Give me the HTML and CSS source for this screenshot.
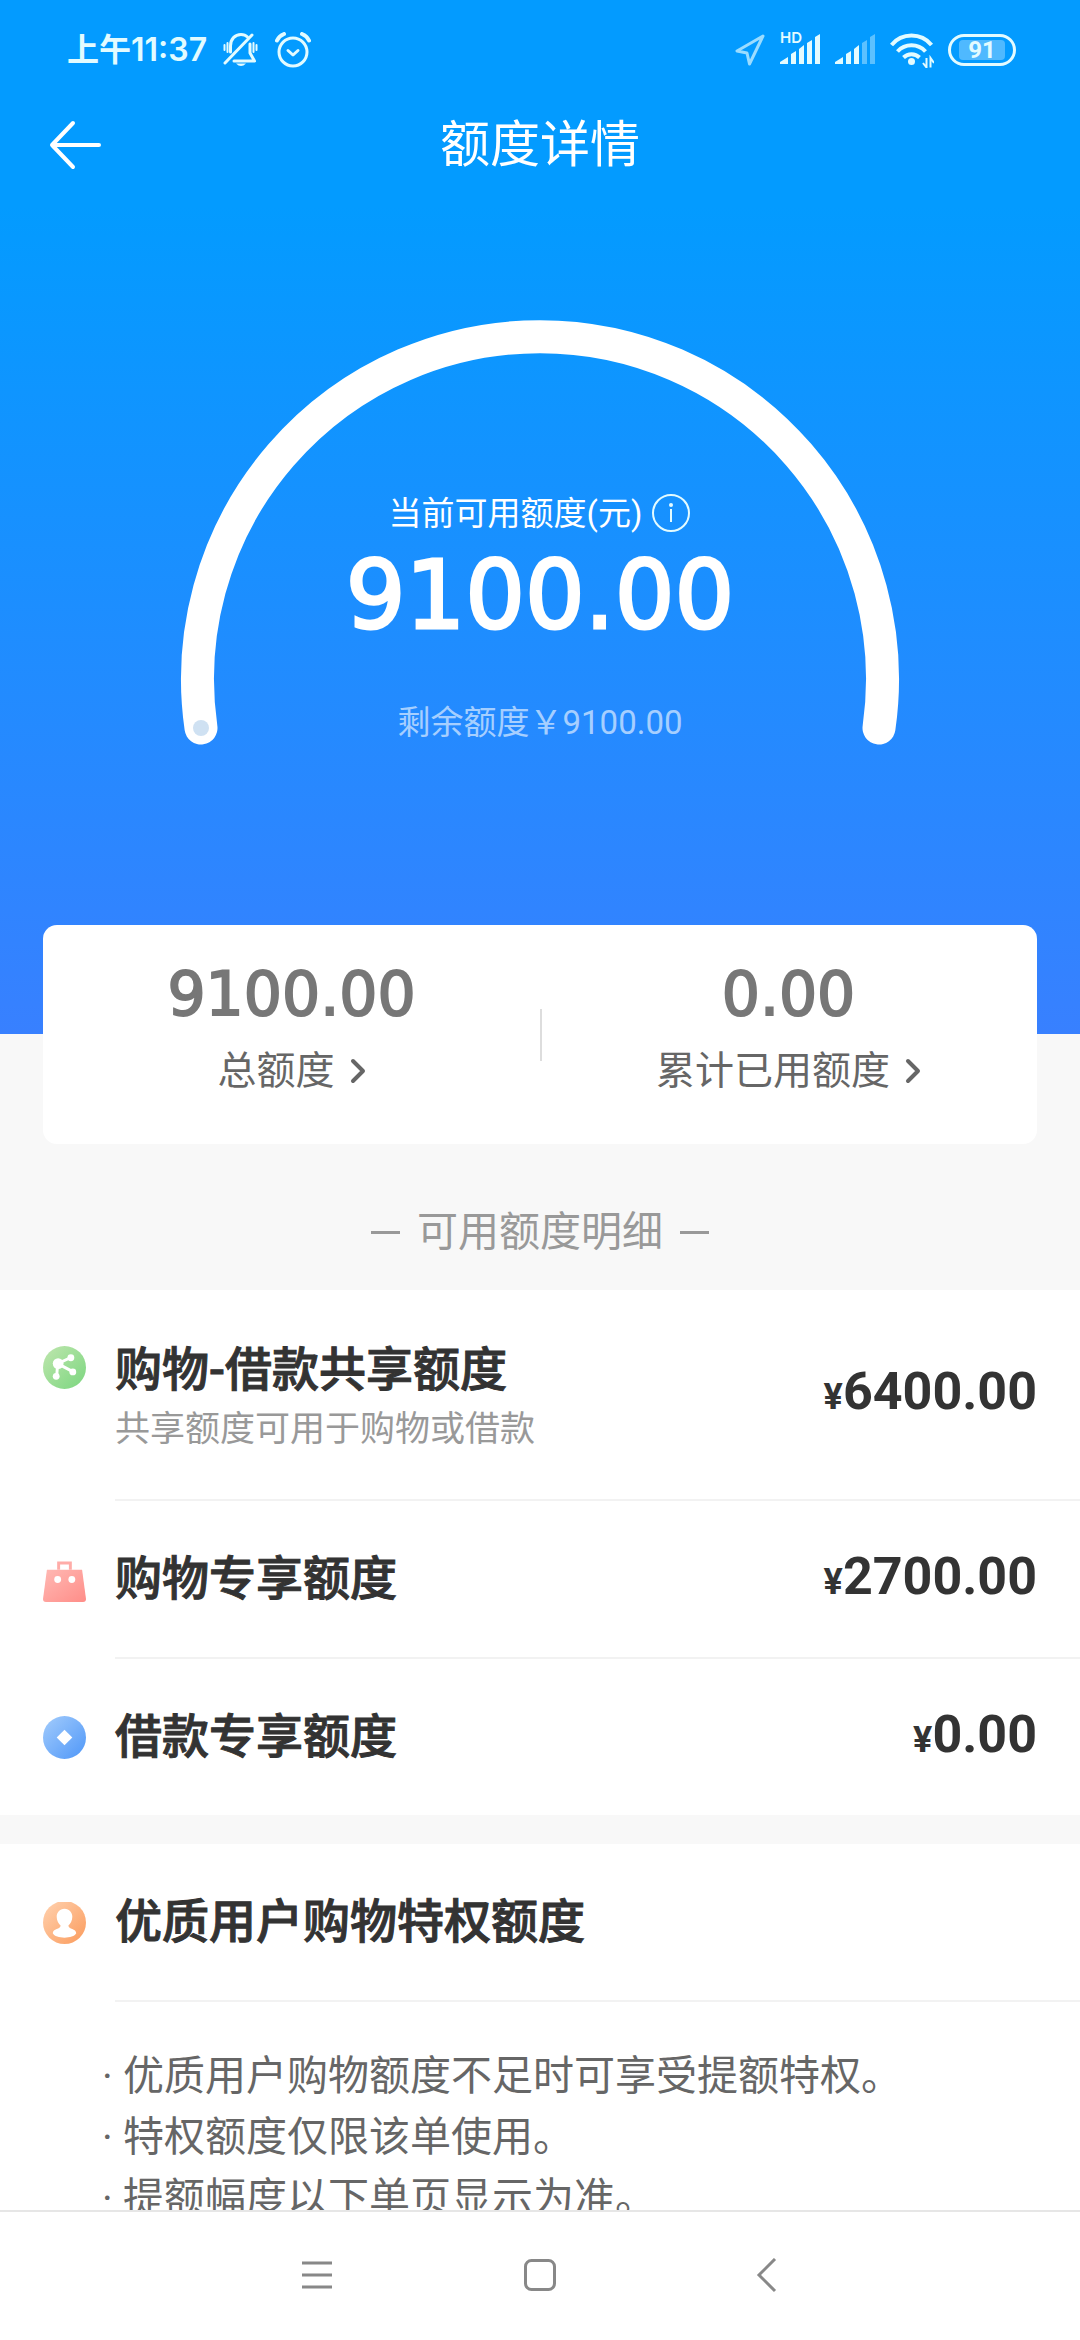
FILE: index.html
```html
<!DOCTYPE html>
<html lang="zh-CN">
<head>
<meta charset="utf-8">
<meta name="viewport" content="width=device-width, initial-scale=1">
<title>额度详情</title>
<link rel="stylesheet" href="styles.css">
</head>
<body>
<div class="app">
  <main class="content">
    <section class="hero">
      <div class="status">
        <div class="status-left">
          <span class="clock">上午11:37</span>
          <svg width="36" height="36" viewBox="0 0 36 36" fill="none" stroke="#e3fbff" stroke-width="3" stroke-linecap="round" stroke-linejoin="round">
            <path d="M2 31L29 3"/>
            <path d="M7.500 20V14C7.500 7 12 2.500 18 2.500C21 2.500 23 3.500 24.500 5"/>
            <path d="M27 12V21L31.500 29H11"/>
            <path d="M1.500 13V18M4.500 11V20M30.500 11V20M33.500 13V18" stroke-width="2"/>
            <path d="M13 31.500H23Q18 36.500 13 31.500Z" fill="#e3fbff" stroke="none"/>
          </svg>
          <svg width="36" height="36" viewBox="0 0 36 36" fill="none" stroke="#e3fbff" stroke-width="3" stroke-linecap="round" stroke-linejoin="round">
            <circle cx="18" cy="20" r="14"/>
            <path d="M13 18.500L18 23L23 18.500"/>
            <path d="M2 8.500Q4 4 9 2M34 8.500Q32 4 27 2" stroke-width="4"/>
          </svg>
        </div>
        <div class="status-right">
          <svg width="32" height="36" viewBox="0 0 32 36" fill="none" stroke="#9bdcff" stroke-width="3" stroke-linejoin="round">
            <path d="M29 4L3 19L13 21L15.500 32Z"/>
          </svg>
          <span class="signal">
            <span class="hd">HD</span>
            <svg width="41" height="36" viewBox="0 0 41 36" fill="#e3fbff">
              <path d="M0 32V30L8 25V32ZM11 32V22L16 19V32ZM19 32V17L24 13V32ZM27 32V11L32 8V32ZM35 32V5L40 2V32Z"/>
            </svg>
          </span>
          <svg width="41" height="36" viewBox="0 0 41 36" fill="#e3fbff">
            <path d="M0 32V30L8 25V32ZM11 32V22L16 19V32ZM19 32V17L24 13V32Z"/>
            <path d="M27 32V11L32 8V32ZM35 32V5L40 2V32Z" opacity=".4"/>
          </svg>
          <svg width="44" height="36" viewBox="0 0 44 36" fill="none" stroke="#e3fbff" stroke-width="4">
            <path d="M1.500 13A26 26 0 0 1 41.500 13"/>
            <path d="M7.500 19.500A19 19 0 0 1 35.500 19.500"/>
            <path d="M13.500 25.500A11.500 11.500 0 0 1 29.500 25.500"/>
            <circle cx="21.500" cy="29.500" r="3.500" fill="#e3fbff" stroke="none"/>
            <path d="M36.500 26V35.500L33 31M40.500 35.500V26L44 31" stroke-width="2"/>
          </svg>
          <span class="battery"><span class="battery-level">91</span></span>
        </div>
      </div>

      <header class="titlebar">
        <button class="icon-btn" type="button" aria-label="返回">
          <svg width="52" height="50" viewBox="0 0 52 50" fill="none" stroke="#fff" stroke-width="4" stroke-linecap="round" stroke-linejoin="round">
            <path d="M24 3L3 25L24 47M3 25H50"/>
          </svg>
        </button>
        <h1 class="title">额度详情</h1>
      </header>

      <div class="gauge">
        <svg class="gauge-arc" viewBox="0 0 720 430" fill="none">
          <path d="M21 410A342.500 342.500 0 1 1 699 410" stroke="#fff" stroke-width="33" stroke-linecap="round"/>
          <circle cx="21" cy="410" r="8" fill="#cfe1f2"/>
        </svg>
        <div class="gauge-body">
          <div class="gauge-label">当前可用额度(元)
            <button class="icon-btn" type="button" aria-label="额度说明">
              <svg width="40" height="40" viewBox="0 0 40 40" fill="none" stroke="#e3fbff" stroke-width="2">
                <circle cx="20" cy="19" r="18"/>
                <path d="M20 15V28"/>
                <circle cx="20" cy="11" r="2" fill="#e3fbff" stroke="none"/>
              </svg>
            </button>
          </div>
          <div class="gauge-value">9100.00</div>
          <div class="gauge-rest">剩余额度￥9100.00</div>
        </div>
      </div>
    </section>

    <section class="summary">
      <a class="summary-item" href="#total">
        <span class="summary-value">9100.00</span>
        <span class="summary-label">总额度
          <svg width="16" height="26" viewBox="0 0 16 26" fill="none" stroke="#666" stroke-width="4" stroke-linecap="round" stroke-linejoin="round"><path d="M3 3L13 13L3 23"/></svg>
        </span>
      </a>
      <a class="summary-item" href="#used">
        <span class="summary-value">0.00</span>
        <span class="summary-label">累计已用额度
          <svg width="16" height="26" viewBox="0 0 16 26" fill="none" stroke="#666" stroke-width="4" stroke-linecap="round" stroke-linejoin="round"><path d="M3 3L13 13L3 23"/></svg>
        </span>
      </a>
    </section>

    <h2 class="section-title">可用额度明细</h2>

    <ul class="list">
      <li class="row row-tall">
        <svg class="row-icon" viewBox="0 0 44 44">
          <defs><linearGradient id="green" x1="0" y1="0" x2="1" y2="1"><stop offset="0" stop-color="#bfe6ae"/><stop offset="1" stop-color="#7bd67f"/></linearGradient></defs>
          <circle cx="22" cy="22" r="22" fill="url(#green)"/>
          <path d="M15 18L28 12M15 18L30 26M15 18L14 31" stroke="#fff" stroke-width="3" fill="none"/>
          <g fill="#fff"><circle cx="15.500" cy="18" r="5.500"/><circle cx="28.500" cy="12" r="3.500"/><circle cx="30.500" cy="26.500" r="3.500"/><circle cx="13.500" cy="31" r="3.500"/></g>
        </svg>
        <div class="row-body">
          <div class="row-text">
            <h3 class="row-title">购物-借款共享额度</h3>
            <p class="row-sub">共享额度可用于购物或借款</p>
          </div>
          <span class="amount"><small class="yen">¥</small>6400.00</span>
        </div>
      </li>
      <li class="row">
        <svg class="row-icon" viewBox="0 0 44 44">
          <defs><linearGradient id="red" x1="0" y1="0" x2="1" y2="1"><stop offset="0" stop-color="#ffb9b4"/><stop offset="1" stop-color="#ff8d88"/></linearGradient></defs>
          <path d="M16 11V4H28V11" fill="none" stroke="#ffaca8" stroke-width="3"/>
          <path d="M4 11H40L44 41Q44 44 41 44H3Q0 44 0 41Z" fill="url(#red)"/>
          <circle cx="15" cy="21" r="3.500" fill="#fff"/><circle cx="29.500" cy="21" r="3.500" fill="#fff"/>
        </svg>
        <div class="row-body">
          <h3 class="row-title">购物专享额度</h3>
          <span class="amount"><small class="yen">¥</small>2700.00</span>
        </div>
      </li>
      <li class="row">
        <svg class="row-icon" viewBox="0 0 44 44">
          <defs><linearGradient id="blue" x1="0" y1="0" x2="1" y2="1"><stop offset="0" stop-color="#a3ccfc"/><stop offset="1" stop-color="#4f97f8"/></linearGradient></defs>
          <circle cx="22" cy="22" r="22" fill="url(#blue)"/>
          <path d="M22 14L30 22L22 30L14 22Z" fill="#fff"/>
        </svg>
        <div class="row-body">
          <h3 class="row-title">借款专享额度</h3>
          <span class="amount"><small class="yen">¥</small>0.00</span>
        </div>
      </li>
    </ul>

    <section class="privilege">
      <div class="row">
        <svg class="row-icon" viewBox="0 0 44 44">
          <defs><linearGradient id="orange" x1="0" y1="0" x2="1" y2="1"><stop offset="0" stop-color="#ffd2b0"/><stop offset="1" stop-color="#fb9b5c"/></linearGradient></defs>
          <circle cx="22" cy="21" r="22" fill="url(#orange)"/>
          <path d="M22 7C27 7 30 11 30 15C30 19 28 22 26 24C26 28 34 27 34 32C31 38 13 38 10 32C10 27 18 28 18 24C16 22 14 19 14 15C14 11 17 7 22 7Z" fill="#fff"/>
        </svg>
        <div class="row-body">
          <h3 class="row-title">优质用户购物特权额度</h3>
        </div>
      </div>
      <ul class="notes">
        <li>优质用户购物额度不足时可享受提额特权。</li>
        <li>特权额度仅限该单使用。</li>
        <li>提额幅度以下单页显示为准。</li>
      </ul>
    </section>
  </main>

  <nav class="navbar">
    <button class="icon-btn" type="button" aria-label="菜单">
      <svg width="36" height="36" viewBox="0 0 36 36" fill="none" stroke="#888" stroke-width="3"><path d="M4 5H34M4 17H34M4 29H34"/></svg>
    </button>
    <button class="icon-btn" type="button" aria-label="主页">
      <svg width="36" height="36" viewBox="0 0 36 36" fill="none" stroke="#888" stroke-width="3"><rect x="3.500" y="2.500" width="29" height="29" rx="6"/></svg>
    </button>
    <button class="icon-btn" type="button" aria-label="后退">
      <svg width="36" height="36" viewBox="0 0 36 36" fill="none" stroke="#888" stroke-width="3"><path d="M29 1L13 17L29 33"/></svg>
    </button>
  </nav>
</div>
</body>
</html>
```
FILE: styles.css
```css
* {
  box-sizing: border-box;
}

body {
  margin: 0;
  background: #f8f8f8;
  font-family: Roboto, "Noto Sans CJK SC", sans-serif;
  color: #333;
}

h1, h2, h3, p, ul {
  margin: 0;
  padding: 0;
  font-weight: 400;
}

ul {
  list-style: none;
}

svg {
  display: block;
  flex: none;
}

.icon-btn {
  display: block;
  padding: 0;
  border: 0;
  background: none;
}

.app {
  display: flex;
  flex-direction: column;
  height: 100vh;
}

.content {
  flex: 1;
  min-height: 0;
  overflow: hidden;
}

/* Hero */
.hero {
  padding-bottom: 286px;
  background: linear-gradient(#039bff 0%, #039bff 20%, #3880ff 100%);
  color: #fff;
}

.status {
  display: flex;
  justify-content: space-between;
  height: 100px;
  padding: 0 64px 0 67px;
  align-items: center;
  color: #e3fbff;
}

.status-left,
.status-right {
  display: flex;
  align-items: center;
}

.status-left {
  gap: 16px;
}

.status-right {
  gap: 14px;
}

.clock {
  font: 600 32px/36px Inter, "Noto Sans CJK SC", sans-serif;
}

.signal {
  position: relative;
}

.hd {
  position: absolute;
  top: -2px;
  left: 0;
  font: 600 15px/15px Inter, sans-serif;
}

.battery {
  width: 68px;
  height: 32px;
  padding: 3px 8px;
  border: 3px solid #e3fbff;
  border-radius: 16px;
}

.battery-level {
  display: block;
  border-radius: 4px;
  background: rgba(255, 255, 255, .3);
  font: 700 24px/20px Roboto, sans-serif;
  text-align: center;
}

.titlebar {
  display: grid;
  grid-template-columns: 52px 1fr 52px;
  align-items: center;
  height: 90px;
  padding: 0 49px;
}

.title {
  font-size: 50px;
  line-height: 60px;
  text-align: center;
}

.gauge {
  display: grid;
  justify-content: center;
  padding-top: 128px;
}

.gauge-arc {
  grid-area: 1 / 1;
  width: 720px;
  height: 430px;
}

.gauge-body {
  grid-area: 1 / 1;
  align-self: end;
  display: flex;
  flex-direction: column;
  align-items: center;
}

.gauge-label {
  display: flex;
  align-items: center;
  gap: 9px;
  font-size: 33px;
  line-height: 40px;
}

.gauge-value {
  margin-top: 4px;
  font: 94px/116px "DejaVu Sans", sans-serif;
  -webkit-text-stroke: 3px #fff;
}

.gauge-rest {
  margin: 49px 0 5px;
  font-size: 33px;
  line-height: 40px;
  color: rgba(255, 255, 255, .6);
}

/* Summary card */
.summary {
  position: relative;
  display: grid;
  grid-template-columns: 1fr 1fr;
  margin: -109px 43px 0;
  padding: 33px 0 45px;
  border-radius: 14px;
  background: #fff;
}

.summary-item {
  display: flex;
  flex-direction: column;
  align-items: center;
  gap: 13px;
  color: #666;
  text-decoration: none;
}

.summary-item + .summary-item::before {
  content: "";
  position: absolute;
  top: 84px;
  left: 50%;
  width: 2px;
  height: 52px;
  background: #ddd;
}

.summary-value {
  font: 60px/72px "DejaVu Sans", sans-serif;
  color: #777;
  -webkit-text-stroke: 2px #777;
}

.summary-label {
  display: flex;
  align-items: center;
  gap: 15px;
  font-size: 39px;
  line-height: 56px;
}

.section-title {
  display: flex;
  justify-content: center;
  align-items: center;
  gap: 17px;
  padding: 58px 0 28px;
  font-size: 41px;
  line-height: 60px;
  color: #999;
}

.section-title::before,
.section-title::after {
  content: "";
  width: 29px;
  height: 3px;
  background: #999;
}

/* Rows */
.list,
.privilege {
  background: #fff;
}

.row {
  display: flex;
  align-items: center;
  gap: 29px;
  padding-left: 43px;
}

.row-icon {
  width: 43px;
  height: 43px;
}

.row-body {
  flex: 1;
  display: flex;
  justify-content: space-between;
  align-items: center;
  height: 158px;
  padding-right: 43px;
  border-bottom: 2px solid #f2f2f2;
}

.row-tall {
  align-items: flex-start;
}

.row-tall .row-icon {
  margin-top: 56px;
}

.row-tall .row-body {
  height: 211px;
}

.row-text {
  padding-top: 10px;
}

.list .row:last-child .row-body {
  height: 156px;
  border-bottom: 0;
}

.row-title {
  font-size: 47px;
  line-height: 60px;
  font-weight: 500;
  -webkit-text-stroke: 1px #333;
}

.row-sub {
  font-size: 35px;
  line-height: 60px;
  color: #999;
}

.amount {
  font-size: 52px;
  line-height: 60px;
  font-weight: 700;
}

.yen {
  font-size: 36px;
}

.privilege {
  margin-top: 29px;
}

.notes {
  padding: 44px 43px 44px 102px;
  font-size: 41px;
  line-height: 61px;
  color: #666;
}

.notes li::before {
  content: "· ";
}

/* System navigation */
.navbar {
  display: flex;
  justify-content: center;
  align-items: center;
  gap: 188px;
  height: 130px;
  border-top: 2px solid #e6e6e6;
  background: #fff;
}
```
